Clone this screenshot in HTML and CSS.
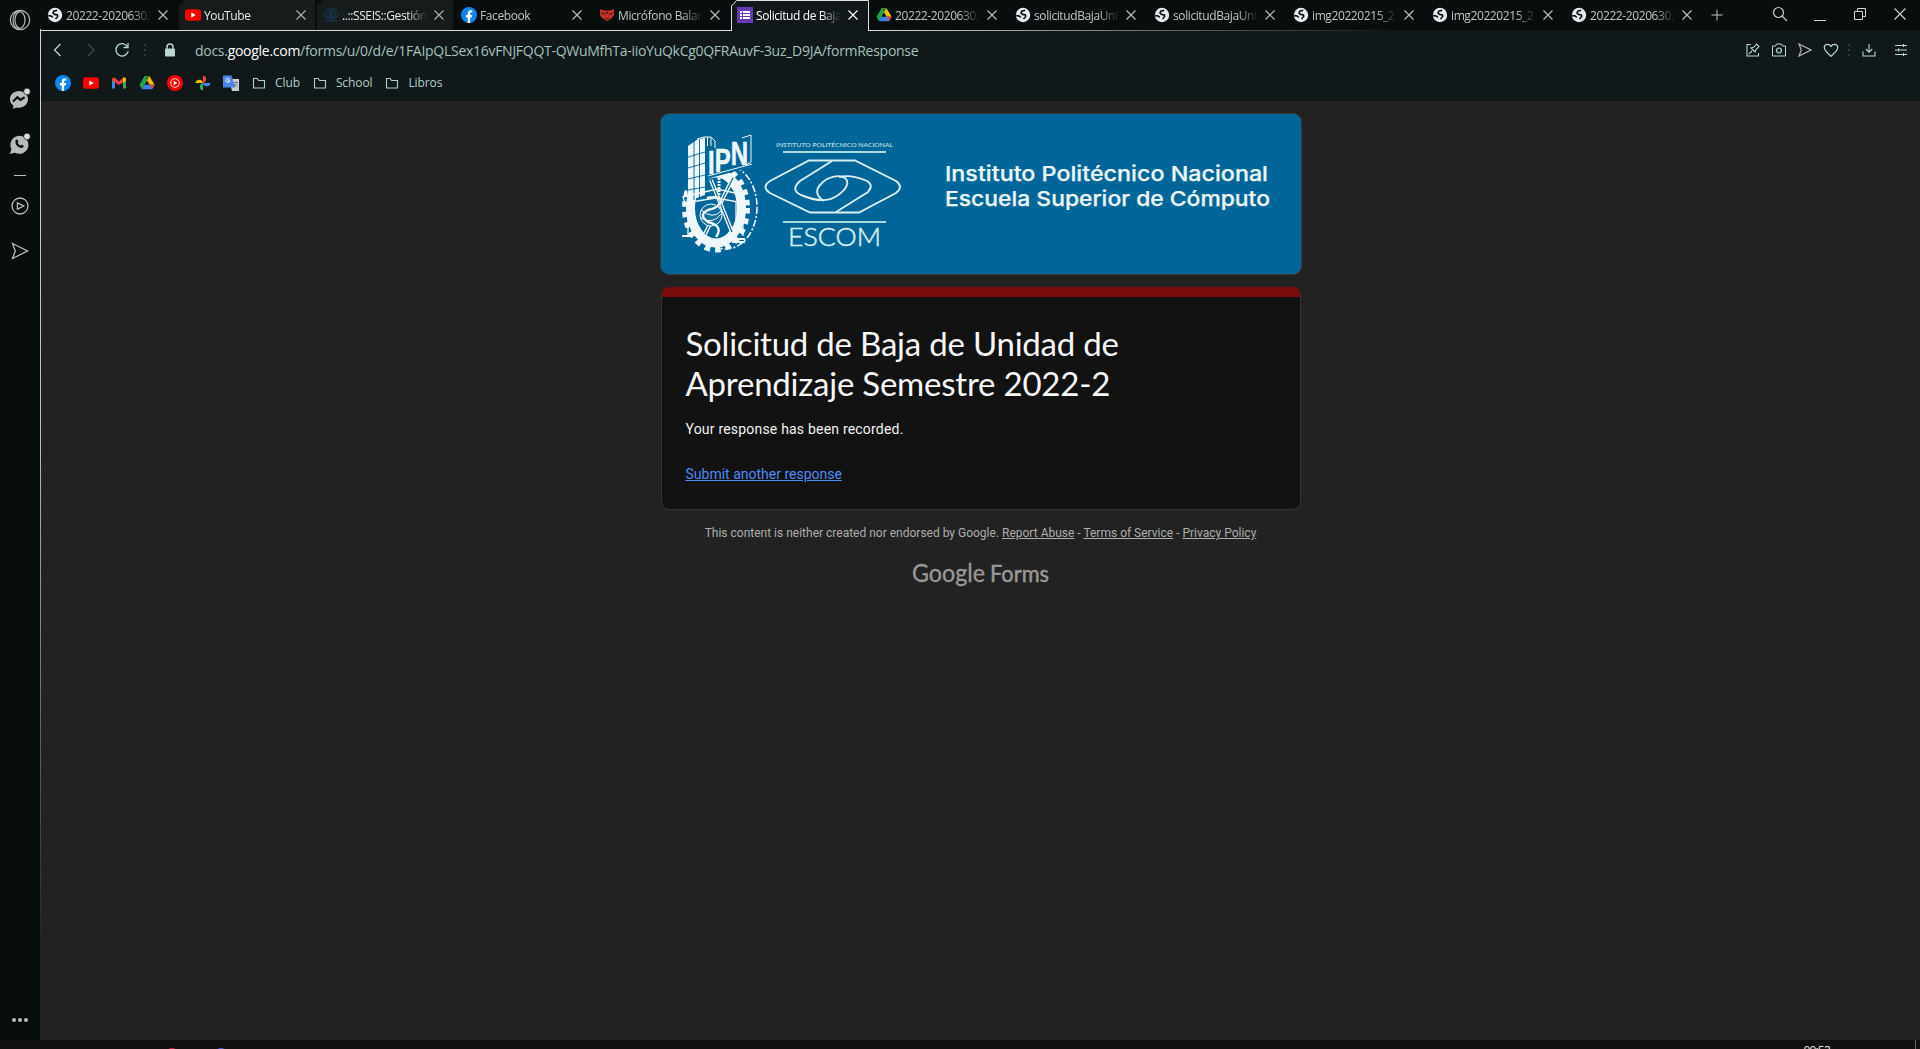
FILE: index.html
```html
<!DOCTYPE html>
<html lang="en">
<head>
<meta charset="utf-8">
<title>Solicitud de Baja de Unidad de Aprendizaje Semestre 2022-2</title>
<link rel="stylesheet" href="styles.css">
</head>
<body>
<svg width="0" height="0" class="defs">
  <symbol id="globe" viewBox="0 0 16 16"><circle cx="8" cy="8" r="7.2" fill="#e8eaed"/><path d="M10.200 3.200 6.800 4.200 6 6l1.600 1.400 2.800.5.300 1.500-2.200 2.600M1.200 8.600l3 .3 1.600 1.400" fill="none" stroke="#0a0f0f" stroke-width="1.600"/></symbol>
  <symbol id="yt" viewBox="0 0 16 16"><rect y="2.2" width="16" height="11.6" rx="3" fill="#f00"/><path d="M6.3 5.4v5.2L10.8 8z" fill="#fff"/></symbol>
  <symbol id="fb" viewBox="0 0 16 16"><circle cx="8" cy="8" r="8" fill="#0c86f2"/><path d="M6.8 16v-5.6H4.9V8h1.9V6.4c0-2.1 1.1-3.1 3-3.1l1.5.1v2h-1c-.9 0-1.2.5-1.2 1.2V8h2.1l-.4 2.4H9.1V16z" fill="#fff"/></symbol>
  <symbol id="drive" viewBox="0 0 16 16"><path d="M5.5 1.2h5L8 5.5 3 14.2.4 9.8z" fill="#24a14b"/><path d="M5.5 1.2h5l5.1 8.6h-5z" fill="#fbbc04"/><path d="M5.5 1.2h5L8 5.6z" fill="#18803a"/><path d="M5.4 9.8h10.2L13 14.2H3z" fill="#3c80f6"/><path d="M10.6 9.8h5L13 14.2z" fill="#ea4335"/></symbol>
  <symbol id="eye" viewBox="0 0 16 16"><g fill="none" stroke="#153a5a" stroke-width="1"><path d="M2 2h12M2 14h12M0 8l5-4h6l5 4-5 4H5z"/><ellipse cx="8" cy="8" rx="4.5" ry="2.4"/><circle cx="8" cy="8" r="1.4"/></g></symbol>
  <symbol id="wolf" viewBox="0 0 16 16"><path d="M1 2l4 1.500h6l4-1.500v6l-2 3-2.500 1.500L8 14l-2.500-1.500L3 11 1 8z" fill="#c4332a"/><path d="M2 5.500L4.500 7 6 8M14 5.500L11.500 7 10 8M7 5l1 1.500L9 5M6 11l2 1 2-1" fill="none" stroke="#190b0b" stroke-width=".9"/></symbol>
  <symbol id="forms" viewBox="0 0 16 16"><path fill="#673ab7" d="M0 0h16v16H0z"/><path d="M3 4h2v2H3zm0 3h2v2H3zm0 3h2v2H3zM6 4h7v2H6zm0 3h7v2H6zm0 3h7v2H6z" fill="#fff"/></symbol>
  <symbol id="x" viewBox="0 0 12 12"><path d="M1.5 1.5l9 9m0-9l-9 9" fill="none" stroke="currentColor" stroke-width="1.1"/></symbol>
  <symbol id="folder" viewBox="0 0 14 14"><path d="M1.5 2.5h3.7l1.3 2h6v7.5h-11z" fill="none" stroke="#b3cfcc" stroke-width="1.1"/></symbol>
  <symbol id="plane" viewBox="0 0 18 18"><path d="M1.5 1.5L16.5 9l-15 7.5L4.3 9z" fill="none" stroke="currentColor" stroke-width="1.3"/></symbol>
</svg>
<div class="browser">
  <aside class="sidebar">
    <svg class="opera" width="22" height="22" viewBox="0 0 22 22"><g fill="none" stroke="#b5b8b8" stroke-width="1.2"><circle cx="11" cy="11" r="9.7"/><ellipse cx="11" cy="11" rx="5" ry="8.3"/><path d="M10 2C5 3 4 7 4 11s1 8 6 9"/></g></svg>
    <svg class="messenger" width="22" height="22" viewBox="0 0 22 22"><path d="M10 3c-5 0-9 3.600-9 8.200 0 2.600 1.200 4.600 3.200 6.100V21l3-1.600c1 .3 1.800.3 2.800.3 5 0 9-3.800 9-8.500C19 6.600 15 3 10 3z" fill="#bbb"/><path d="M4 13.500l4.400-4.200 3 2.600 4.200-2.600" fill="none" stroke="#0a0f0f" stroke-width="2.200"/><circle cx="18" cy="3.500" r="3.300" fill="#ddd" stroke="#080e0e" stroke-width=".6"/></svg>
    <svg class="whatsapp" width="22" height="22" viewBox="0 0 22 22"><path d="M1 21l1.400-5A9 9 0 1 1 6 19.700z" fill="#bbb"/><path d="M6.500 7.500c1.500-2 2.300-.5 2.900 1.200-1.500 1.200-.4 2.500 2 3.900 1.200-1.500 2-.5 3.300.4-.2 2-2.200 2.500-4.200 1.600-3-1.500-4.600-4-4-7.100z" fill="#0a0f0f"/><circle cx="18" cy="3.500" r="3.300" fill="#ddd" stroke="#080e0e" stroke-width=".6"/></svg>
    <span class="rule"></span>
    <svg class="player" width="18" height="18" viewBox="0 0 18 18"><g fill="none" stroke="#bbb" stroke-width="1.300"><circle cx="9" cy="9" r="8"/><path d="M6.400 5.800v6.400L12.800 9z"/></g></svg>
    <svg class="send" width="18" height="18"><use href="#plane"/></svg>
    <span class="more"><i></i><i></i><i></i></span>
  </aside>
  <div class="window">
    <header class="tabs">
      <div class="tab"><svg class="ico"><use href="#globe"/></svg><span>20222-2020630213</span><svg class="x"><use href="#x"/></svg></div>
      <div class="tab live"><svg class="ico"><use href="#yt"/></svg><span>YouTube</span><svg class="x"><use href="#x"/></svg></div>
      <div class="tab live"><svg class="ico"><use href="#eye"/></svg><span>..::SSEIS::Gestión</span><svg class="x"><use href="#x"/></svg></div>
      <div class="tab"><svg class="ico"><use href="#fb"/></svg><span>Facebook</span><svg class="x"><use href="#x"/></svg></div>
      <div class="tab"><svg class="ico"><use href="#wolf"/></svg><span>Micrófono Balam</span><svg class="x"><use href="#x"/></svg></div>
      <div class="tab wide active"><svg class="frame" width="139" height="31" viewBox="0 0 139 31"><path d="M.5 31V6L5.500.5H137.500V31" fill="#101819" stroke="#dedede"/></svg><svg class="ico"><use href="#forms"/></svg><span>Solicitud de Baja de</span><svg class="x"><use href="#x"/></svg></div>
      <div class="tab wide"><svg class="ico"><use href="#drive"/></svg><span>20222-2020630213</span><svg class="x"><use href="#x"/></svg></div>
      <div class="tab wide"><svg class="ico"><use href="#globe"/></svg><span>solicitudBajaUnidad</span><svg class="x"><use href="#x"/></svg></div>
      <div class="tab wide"><svg class="ico"><use href="#globe"/></svg><span>solicitudBajaUnidad</span><svg class="x"><use href="#x"/></svg></div>
      <div class="tab wide"><svg class="ico"><use href="#globe"/></svg><span>img20220215_2132</span><svg class="x"><use href="#x"/></svg></div>
      <div class="tab wide"><svg class="ico"><use href="#globe"/></svg><span>img20220215_2132</span><svg class="x"><use href="#x"/></svg></div>
      <div class="tab wide"><svg class="ico"><use href="#globe"/></svg><span>20222-2020630213</span><svg class="x"><use href="#x"/></svg></div>
      <svg class="plus" width="12" height="12" viewBox="0 0 12 12"><path d="M6 .5v11M.5 6h11" stroke="#bfc2c2"/></svg>
      <div class="controls">
        <svg width="16" height="16" viewBox="0 0 16 16"><g fill="none" stroke="#c6c8c8" stroke-width="1.200"><circle cx="6.500" cy="6.500" r="5"/><path d="M10 10l5 5"/></g></svg>
        <svg width="16" height="16" viewBox="0 0 16 16"><path d="M2 14.500h12" stroke="#d5d7d7"/></svg>
        <svg width="16" height="16" viewBox="0 0 16 16"><path d="M2.500 5.500h8v8h-8zM5.500 5V2.500h8v8H11" fill="none" stroke="#d5d7d7"/></svg>
        <svg width="16" height="16" viewBox="0 0 16 16"><path d="M2.500 2.500l11 11m0-11l-11 11" stroke="#d5d7d7" stroke-width="1.100"/></svg>
      </div>
    </header>
    <div class="toolbar">
      <svg class="back" width="12" height="14" viewBox="0 0 12 14"><path d="M8.500 1L2.500 7l6 6" fill="none" stroke="#b9d6d3" stroke-width="1.300"/></svg>
      <svg class="fwd" width="12" height="14" viewBox="0 0 12 14"><path d="M3 1l6 6-6 6" fill="none" stroke="#3e4849" stroke-width="1.300"/></svg>
      <svg class="reload" width="16" height="16" viewBox="0 0 16 16"><path d="M13.300 4.500A6.200 6.200 0 1 0 14.200 9M14 1v4.500H9.500" fill="none" stroke="#b9d6d3" stroke-width="1.300"/></svg>
      <span class="dots"><i></i><i></i><i></i></span>
      <svg class="lock" width="12" height="14" viewBox="0 0 12 14"><path d="M3 6V4a3 3 0 0 1 6 0v2" fill="none" stroke="#b9d6d3" stroke-width="1.500"/><rect x="1" y="5.500" width="10" height="8" rx="1" fill="#b9d6d3"/></svg>
      <div class="url">docs.<b>google.com</b>/forms/u/0/d/e/1FAIpQLSex16vFNJFQQT-QWuMfhTa-iioYuQkCg0QFRAuvF-3uz_D9JA/formResponse</div>
      <div class="actions">
        <svg class="a1" width="14" height="14" viewBox="0 0 14 14"><path d="M5 1.500H1v11.500h11.500V10M3 11l3-3M5 5l4 4 1-2.500 3-3L10.500 1 8 4z" fill="none" stroke="currentColor" stroke-width="1.100"/></svg>
        <svg class="a2" width="16" height="14" viewBox="0 0 16 14"><path d="M1.500 3h3l1-2h5l1 2h3v10h-13z" fill="none" stroke="currentColor"/><circle cx="8" cy="7.500" r="2.500" fill="none" stroke="currentColor" stroke-width="1.200"/></svg>
        <svg class="a3" width="14" height="14" viewBox="0 0 14 14"><path d="M1 1l12 6-12 6 2.300-6z" fill="none" stroke="currentColor" stroke-width="1.200"/></svg>
        <svg class="a4" width="16" height="14" viewBox="0 0 16 14"><path d="M8 13.200C4 9.700 1.300 7.600 1.300 4.500 1.300 1 6 .2 8 3.400 10 .2 14.700 1 14.700 4.500c0 3.100-2.700 5.200-6.700 8.700z" fill="none" stroke="currentColor" stroke-width="1.200"/></svg>
        <span class="dots"><i></i><i></i><i></i></span>
        <svg class="a5" width="14" height="14" viewBox="0 0 14 14"><path d="M1 8.500V13h12V8.500M7 1v8M3.800 6L7 9.200 10.200 6" fill="none" stroke="currentColor" stroke-width="1.100"/></svg>
        <svg class="a6" width="14" height="14" viewBox="0 0 14 14"><path d="M1 2.500h12M1 7h12M1 11.500h12M9.500 1v3M4.500 5.500v3M9.500 10v3" fill="none" stroke="currentColor" stroke-width="1.100"/></svg>
      </div>
    </div>
    <nav class="bookmarks">
      <svg><use href="#fb"/></svg>
      <svg><use href="#yt"/></svg>
      <svg viewBox="0 0 16 16"><path d="M1 3.500v10h3V7z" fill="#4285f4"/><path d="M15 3.500v10h-3V7z" fill="#34a853"/><path d="M1 4.500C1 2.500 3 2 4 3l4 3.300V10L1 5.500z" fill="#ea4335"/><path d="M15 4.500C15 2.500 13 2 12 3L8 6.300V10l4-2.500z" fill="#ea4335"/><path d="M12 3c1-1 3-.5 3 1.500v1.200L12 8z" fill="#fbbc04"/></svg>
      <svg><use href="#drive"/></svg>
      <svg viewBox="0 0 16 16"><circle cx="8" cy="8" r="8" fill="#f00"/><circle cx="8" cy="8" r="4.300" fill="none" stroke="#fff" stroke-width=".9"/><path d="M6.600 5.800v4.400L10.200 8z" fill="#fff"/></svg>
      <svg viewBox="0 0 16 16"><path d="M8 .5a3.800 3.800 0 0 1 0 7.500z" fill="#ea4335"/><path d="M15.500 8A3.800 3.800 0 0 1 8 8z" fill="#4285f4"/><path d="M8 15.500A3.800 3.800 0 0 1 8 8z" fill="#34a853"/><path d="M.5 8A3.800 3.800 0 0 1 8 8z" fill="#fbbc04"/></svg>
      <svg viewBox="0 0 16 16"><path d="M6 4h10v12H9z" fill="#c9ccd0"/><path d="M0 .5h8.500L12 12.500H0z" fill="#4c85ec"/><path d="M7 5H4.800m1.200-1.500A2.100 2.100 0 1 0 7 6H5" fill="none" stroke="#fff" stroke-width=".9"/><path d="M10 7.500h5M12.500 6.500v1M14 8l-3.500 4M11 9l3.500 3" stroke="#5f6d72" fill="none" stroke-width=".8"/></svg>
      <svg class="fold"><use href="#folder"/></svg><span class="club">Club</span>
      <svg class="fold"><use href="#folder"/></svg><span class="school">School</span>
      <svg class="fold"><use href="#folder"/></svg><span>Libros</span>
    </nav>
    <main class="page">
      <svg class="banner" width="640" height="160" viewBox="0 0 640 160">
        <g class="ipn" fill="none" stroke="#eef8fa">
          <ellipse cx="65" cy="93" rx="31" ry="42" stroke-width="1.600" stroke-dasharray="7 2 2 2"/>
          <ellipse cx="55" cy="94" rx="31" ry="41.500" stroke-width="6" stroke-dasharray="5.500 5"/>
          <ellipse cx="55" cy="94" rx="25.500" ry="35" fill="#069" stroke-width="9"/>
          <path d="M24 40l52-14 15 18-8 11-34 9-22 20z" fill="#069" stroke="none"/>
          <path d="M27 32l10-7 7-1v57l-17 6z" fill="#eef8fa" stroke="none"/>
          <path d="M33 27v59M38.500 24v60M27 43l17-5M27 54l17-5M27 65l17-4M27 76l17-3" stroke="#069" stroke-width=".9"/>
          <path d="M36 25l7-2h7l4 4v7M43 23v11M46.500 23v9M50 23v9" stroke-width="1"/>
          <path d="M50 66l21 52M72 64l-28 56" stroke-width="4"/>
          <path d="M50 66l21 52M72 64l-28 56" stroke="#069" stroke-width="1.200"/>
          <path d="M58 64v18" stroke-width="3" stroke-dasharray="2 1"/>
          <path d="M22 83l34-8 27 6-6 7-22-4-31 5zM27 87v34M31 87v34M75 87v37M82 84v38" stroke-width="1.300"/>
          <circle cx="50" cy="101" r="11" fill="#146e9d" stroke-width="1"/>
          <path d="M40 96q12 10 20 1M40 104q12 7 20-4" stroke-width="1"/>
          <path d="M46 84q13-3 14 4-3 6-13 8-10 5 0 12 16 4 8 15" stroke-width="2.400"/>
          <path d="M21 122h11M71 128h13M71 125h13" stroke-width="2"/>
          <path d="M47 62l44-12M81 24l9-3v27l-5 3" stroke-width="1"/>
          <text class="mono" x="47" y="60 57.500 51" font-size="34" textLength="40" lengthAdjust="spacingAndGlyphs">IPN</text>
        </g>
        <g class="escom">
          <text class="tiny" x="115" y="33" textLength="117" lengthAdjust="spacingAndGlyphs">INSTITUTO POLITÉCNICO NACIONAL</text>
          <path d="M122 38h103M122 108h103" stroke="#a9dbdc" stroke-width="2.200"/>
          <path d="M148 46.500h46l41 20.500q8 5.500 0 12l-37 19.500h-49L109 79q-9-6 0-12z"/>
          <path d="M171 47l-32 20q-10 9 1 14c12 5 24 8 34 2 12-7 15-15 10-19-6-4-18-1-24 6-6 6-5 12 3 17"/>
          <path d="M175 98l32-20q6-7-1-11c-9-4-20-6-28-4"/>
          <text class="name" x="127" y="131.500" textLength="93" lengthAdjust="spacingAndGlyphs">ESCOM</text>
        </g>
        <g class="school-name"><text x="284" y="66.500" textLength="323" lengthAdjust="spacingAndGlyphs">Instituto Politécnico Nacional</text><text x="284" y="91.500" textLength="325" lengthAdjust="spacingAndGlyphs">Escuela Superior de Cómputo</text></g>
      </svg>
      <section class="card">
        <h1>Solicitud de Baja de Unidad de<br><span>Aprendizaje Semestre 2022-2</span></h1>
        <p>Your response has been recorded.</p>
        <a href="#">Submit another response</a>
      </section>
      <p class="legal">This content is neither created nor endorsed by Google. <a href="#">Report Abuse</a> - <a href="#">Terms of Service</a> - <a href="#">Privacy Policy</a></p>
      <svg class="brand" width="138" height="30" viewBox="0 0 138 30"><text x="0" y="21" textLength="73" lengthAdjust="spacingAndGlyphs">Google</text><text class="product" x="78" y="21" textLength="59" lengthAdjust="spacingAndGlyphs">Forms</text></svg>
    </main>
  </div>
</div>
<footer class="taskbar"><i class="app red"></i><i class="app blue"></i><span class="clock">09:52</span><i class="edge"></i></footer>
</body>
</html>
```
FILE: styles.css
```css
* { box-sizing: border-box; }
body { margin: 0; width: 1920px; height: 1049px; overflow: hidden; background: #101010; font-family: "Open Sans", "Noto Sans", sans-serif; }
svg { display: block; flex: none; }
.defs { position: absolute; }
.browser { display: flex; height: 1040px; }
.sidebar { width: 41px; background: #080e0e; display: flex; flex-direction: column; align-items: center; color: #bbb; padding-top: 9px; border-right: 1px solid; border-image: linear-gradient(#080e0e 30px, #d8d8d8 30px, #bbb 450px, #222 950px) 1; }
.messenger { margin-top: 57px; }
.whatsapp { margin-top: 23px; }
.rule { width: 12px; height: 1px; background: #bbb; margin-top: 20px; }
.player { margin-top: 21px; }
.send { margin-top: 27px; }
.more { display: flex; gap: 2px; margin-top: auto; margin-bottom: 18px; }
.more i { width: 4px; height: 4px; border-radius: 50%; background: #bbb; }
.window { flex: 1; min-width: 0; display: flex; flex-direction: column; background: #222; }

.tabs { height: 31px; display: flex; background: #080e0e; border-bottom: 1px solid; border-image: linear-gradient(90deg, #d8d8d8 0, #d8d8d8 828px, #101819 1350px) 1; }
.tab { position: relative; flex: none; width: 138px; height: 30px; padding-left: 6px; display: flex; align-items: center; color: #c0c3c3; font-size: 12px; }
.tab.wide { width: 139px; }
.tab .ico { width: 16px; height: 16px; position: relative; }
.tab span { width: 85px; margin-left: 3px; overflow: hidden; white-space: nowrap; letter-spacing: -.4px; position: relative; line-height: 18px; top: 1px; -webkit-mask-image: linear-gradient(90deg, #000 65px, transparent 85px); mask-image: linear-gradient(90deg, #000 65px, transparent 85px); }
.tab .x { width: 12px; height: 12px; margin-left: 6px; position: relative; }
.tab.live { color: #e8e8e8; background: linear-gradient(#161c1c, #161c1c) 0 0 / 136px 30px no-repeat; clip-path: polygon(6px 0, 100% 0, 100% 100%, 0 100%, 0 6px); }
.tab.live .x { color: #b0b3b3; }
.tab.active { color: #fff; }
.frame { position: absolute; left: 0; top: 0; }
.plus { margin: 9px 0 0 7px; }
.controls { display: flex; gap: 24px; margin: 6px 12px 0 auto; }

.toolbar { height: 39px; background: #101819; display: flex; align-items: center; padding: 0 0 1px 11px; color: #b9d6d3; }
.fwd { margin-left: 21px; }
.reload { margin-left: 17px; }
.dots { display: flex; flex-direction: column; gap: 3px; margin-left: 14px; }
.dots i { width: 2px; height: 2px; background: #303a3b; }
.lock { margin-left: 18px; }
.url { margin-left: 19px; font-size: 14px; letter-spacing: -.28px; color: #a5c2bf; white-space: nowrap; }
.url b { font-weight: 400; color: #fff; }
.actions { margin-left: auto; margin-right: 12px; display: flex; align-items: center; }
.a2, .a3, .a4 { margin-left: 11px; }
.a3 { color: #b5b5b5; }
.actions .dots { margin-left: 9px; }
.a5 { margin-left: 12px; }
.a6 { margin-left: 18px; }
.bookmarks { height: 31px; background: #101819; display: flex; align-items: flex-start; padding: 5px 0 0 14px; gap: 12px; font-size: 12px; color: #b3cfcc; }
.bookmarks svg { width: 16px; height: 16px; }
.bookmarks .fold { width: 14px; height: 14px; margin: 1px -1px 0 1px; }
.bookmarks span { line-height: 16px; margin-left: -2px; letter-spacing: -.1px; }

.page { flex: 1; display: flex; flex-direction: column; align-items: center; padding-top: 13px; font-family: Roboto, sans-serif; }
.banner { background: #069; border-radius: 8px; box-shadow: 0 0 0 1px #3a3a3a; }
.mono { font-family: "Liberation Sans", sans-serif; font-weight: 700; fill: #eef8fa; stroke-width: .6; }
.escom { fill: none; stroke: #d8f0ee; stroke-width: 1.9; }
.escom text { fill: #d8f0ee; stroke: none; font-family: Lato, sans-serif; }
.escom .tiny { font-size: 6px; }
.escom .name { font-size: 25px; font-weight: 300; stroke: #d8f0ee; stroke-width: .5; }
.school-name { font-family: Inter, sans-serif; font-weight: 500; font-size: 20.5px; fill: #eaf6f8; stroke: #eaf6f8; stroke-width: .25; }
.card { width: 640px; height: 223px; margin-top: 13px; border: 1px solid #333; border-top: 10px solid #7a0b0b; border-radius: 8px; background: #121212; padding: 26px 24px 0; }
h1 { margin: 0; font: 400 33px/40px Lato, sans-serif; letter-spacing: -.22px; color: #f8f8f8; white-space: nowrap; }
.card p { margin: 16px 0 0; font-size: 14px; line-height: 20px; color: #f2f2f2; letter-spacing: .2px; }
.card a { display: block; margin-top: 25px; font-size: 14px; line-height: 20px; color: #4d8bf5; }
.legal { margin: 15px 0 0; font-size: 12px; line-height: 16px; color: #adadad; }
.legal a { color: inherit; }
.brand { margin-top: 20px; font: 400 24.5px Lato, sans-serif; fill: #999; stroke: #999; stroke-width: .3; }
.brand .product { font-size: 24px; stroke-width: .5; }

.taskbar { height: 9px; display: flex; overflow: hidden; background: #101010; color: #e8e8e8; }
.app { width: 14px; height: 14px; margin-top: 8px; border-radius: 50%; }
.red { background: #d51a48; margin-left: 165px; }
.blue { background: #4a58dd; margin-left: 35px; }
.clock { margin-left: auto; font-size: 12px; line-height: 16px; margin-top: 3px; letter-spacing: -.8px; }
.edge { width: 1px; background: #666; margin-left: 85px; margin-right: 4px; }
```
